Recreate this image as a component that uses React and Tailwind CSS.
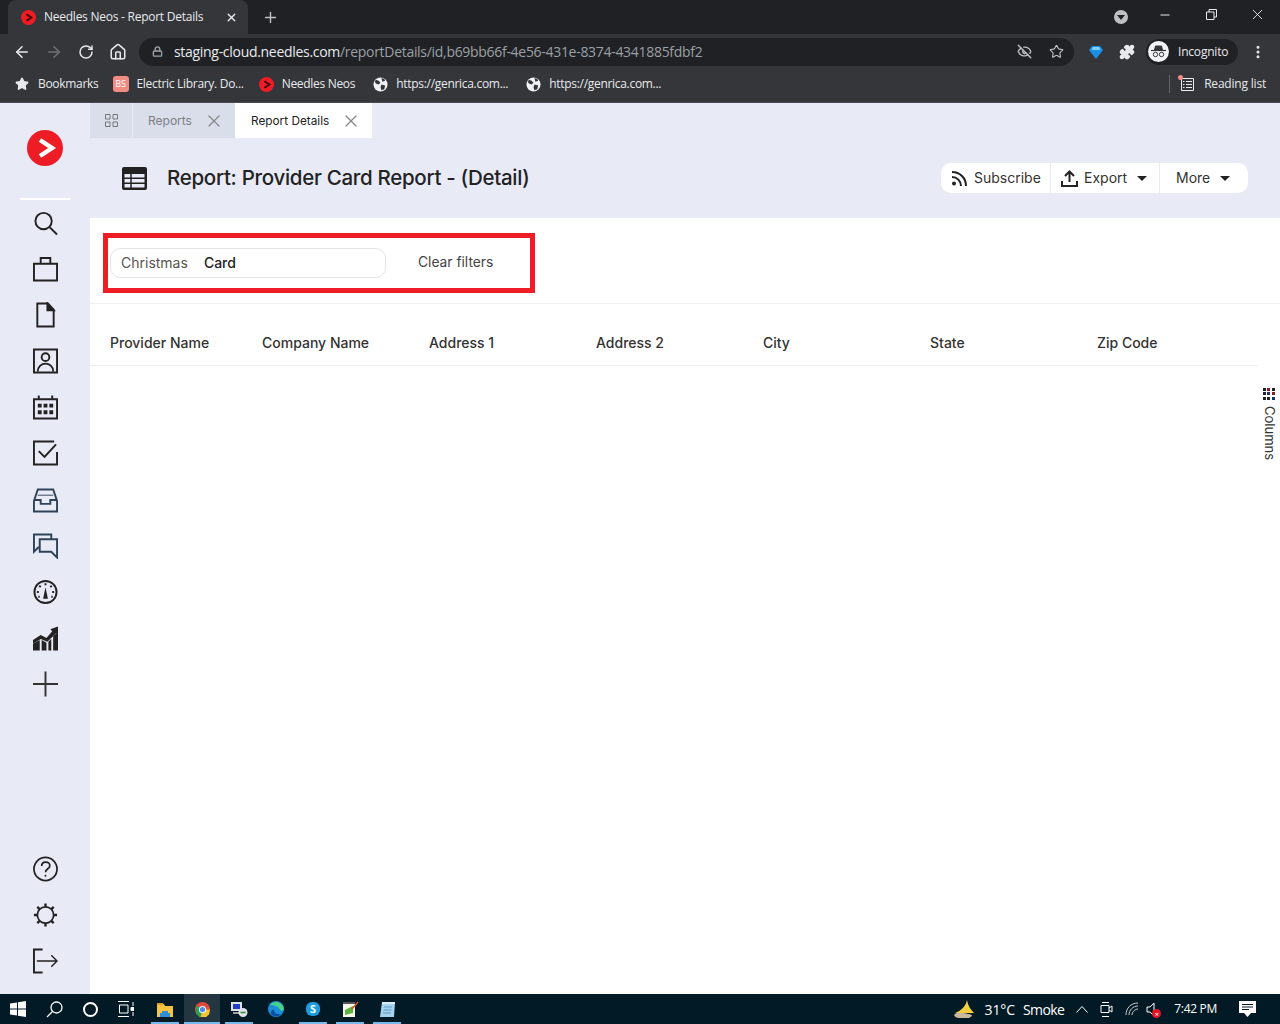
import { Star, ArrowLeft, ArrowRight, RotateCw, Home, Lock, EyeOff, Puzzle, Plus, X, MoreVertical, Minus } from 'lucide-react'

const NeedlesDot = ({ size = 16 }) => (
  <svg width={size} height={size} viewBox="0 0 36 36" className="shrink-0">
    <circle cx="18" cy="18" r="18" fill="#ee1c25" />
    <path d="M13 10l12 8-12 8" fill="none" stroke={size > 20 ? '#fff' : '#3a0a0d'} strokeWidth="4.5" />
  </svg>
)

const Globe = () => (
  <svg width="15" height="15" viewBox="0 0 16 16" className="shrink-0">
    <circle cx="8" cy="8" r="7.5" fill="#f1f3f4" />
    <path d="M3 3l3 1 2 2-2 2-3-1-1-2zM9 8l4 1-1 4-3 1-1-3zM9 1l3 1 1 2-3 1z" fill="#35363a" />
  </svg>
)

const Bookmark = ({ icon, label, className = '' }) => (
  <div className={`flex items-center gap-[8px] ${className}`}>
    {icon}
    <span className="text-[12px] text-[#e8eaed] tracking-[-0.3px] whitespace-nowrap">{label}</span>
  </div>
)

function Browser() {
  return (
    <div className="h-[103px] shrink-0 bg-[#35363a] font-['Open_Sans',sans-serif]">
      {/* tab strip */}
      <div className="h-[34px] bg-[#202124] flex items-end pl-[8px]">
        <div className="w-[240px] h-[34px] bg-[#35363a] rounded-t-[8px] flex items-center pl-[13px] pr-[10px]">
          <NeedlesDot size={15} />
          <span className="ml-[8px] text-[12px] text-[#e8eaed] tracking-[-0.25px] whitespace-nowrap">Needles Neos - Report Details</span>
          <X size={13} strokeWidth={2.5} className="ml-auto text-[#e8eaed] shrink-0" />
        </div>
        <div className="h-[34px] flex items-center ml-[14px]">
          <Plus size={17} strokeWidth={2} className="text-[#bdc1c6]" />
        </div>
        <div className="ml-auto h-[34px] flex items-center">
          <div className="w-[14px] h-[14px] rounded-full bg-[#bdc1c6] flex items-center justify-center mr-[14px] mt-[-1px]">
            <div className="w-0 h-0 border-x-[4px] border-x-transparent border-t-[5px] border-t-[#202124] mt-[1px]" />
          </div>
          <div className="w-[46px] flex justify-center mt-[-5px]"><Minus size={14} className="text-[#e8eaed]" /></div>
          <div className="w-[46px] flex justify-center mt-[-5px]">
            <svg width="11" height="11" viewBox="0 0 11 11" fill="none" stroke="#e8eaed"><path d="M.5 3h7.5v7.5H.5zM3 3V.5h7.500V8H8" /></svg>
          </div>
          <div className="w-[46px] flex justify-center mt-[-5px]"><X size={17} strokeWidth={1.3} className="text-[#e8eaed]" /></div>
        </div>
      </div>
      {/* toolbar */}
      <div className="h-[35px] flex items-center pl-[13px]">
        <ArrowLeft size={18} strokeWidth={2} className="text-[#e8eaed] shrink-0" />
        <ArrowRight size={18} strokeWidth={2} className="text-[#6f7175] shrink-0 ml-[14px]" />
        <RotateCw size={16} strokeWidth={2.2} className="text-[#e8eaed] shrink-0 ml-[15px]" />
        <Home size={18} strokeWidth={2} className="text-[#e8eaed] shrink-0 ml-[15px]" />
        <div className="ml-[12px] w-[935px] h-[28px] bg-[#202124] rounded-full flex items-center pl-[13px] pr-[10px]">
          <Lock size={11} strokeWidth={3} className="text-[#9aa0a6] shrink-0" />
          <span className="ml-[11px] text-[14px] tracking-[-0.3px] whitespace-nowrap text-[#e8eaed]">
            staging-cloud.needles.com<span className="text-[#9aa0a6]">/reportDetails/id,b69bb66f-4e56-431e-8374-4341885fdbf2</span>
          </span>
          <EyeOff size={15} strokeWidth={2.2} className="ml-auto text-[#bdc1c6] shrink-0" />
          <Star size={15} strokeWidth={1.8} className="ml-[17px] text-[#bdc1c6] shrink-0" />
        </div>
        <svg width="14" height="14" viewBox="0 0 14 14" className="ml-[15px] shrink-0">
          <path d="M3 1h8l3 4-7 9-7-9z" fill="#1a8fe8" />
          <path d="M4 2h6l1.500 3h-9z" fill="#7cd0fb" />
        </svg>
        <Puzzle size={16} fill="#e8eaed" className="ml-[16px] text-[#e8eaed] shrink-0" />
        <div className="ml-[11px] h-[26px] w-[92px] bg-[#202124] rounded-full flex items-center pl-[2px] shrink-0">
          <div className="w-[21px] h-[21px] rounded-full bg-[#f1f3f4] flex items-center justify-center shrink-0">
            <svg width="15" height="13" viewBox="0 0 15 13" fill="none" stroke="#35363a">
              <path d="M3.500 5l1-4h6l1 4z" fill="#35363a" />
              <path d="M0 5.500h15" strokeWidth="1.200" />
              <circle cx="4.500" cy="9.500" r="2.200" />
              <circle cx="10.500" cy="9.500" r="2.200" />
            </svg>
          </div>
          <span className="ml-[9px] text-[12px] text-[#e8eaed] tracking-[-0.2px]">Incognito</span>
        </div>
        <MoreVertical size={16} strokeWidth={2.5} className="ml-[12px] text-[#e8eaed] shrink-0" />
      </div>
      {/* bookmarks */}
      <div className="h-[34px] border-b border-[#4a4b50] flex items-center pl-[15px] pr-[14px] pb-[3px]">
        <Bookmark icon={<Star size={14} fill="#e8eaed" className="text-[#e8eaed] mr-[1px]" />} label="Bookmarks" />
        <Bookmark
          className="ml-[14px]"
          icon={<div className="w-[16px] h-[16px] rounded-[3px] bg-[#f28b82] text-[9px] text-white flex items-center justify-center">BS</div>}
          label="Electric Library. Do..."
        />
        <Bookmark className="ml-[15px]" icon={<NeedlesDot size={15} />} label="Needles Neos" />
        <Bookmark className="ml-[18px]" icon={<Globe />} label="https://genrica.com..." />
        <Bookmark className="ml-[18px]" icon={<Globe />} label="https://genrica.com..." />
        <div className="ml-auto h-[18px] w-px bg-[#5f6368]" />
        <div className="relative ml-[10px]">
          <svg width="15" height="15" viewBox="0 0 15 15" fill="none" stroke="#e8eaed" className="shrink-0">
            <path d="M1.500 1.500h12v12h-12zM6 4.500h6M6 7.500h6M6 10.500h6M3 4.500h1.500M3 7.500h1.500M3 10.500h1.500" />
          </svg>
          <div className="absolute left-[-2px] top-[-2px] w-[5px] h-[5px] rounded-full bg-[#f28b82]" />
        </div>
        <span className="ml-[9px] text-[12px] text-[#e8eaed] tracking-[-0.2px] whitespace-nowrap">Reading list</span>
      </div>
    </div>
  )
}

const ic = { width: 25, height: 26, viewBox: '0 0 26 26', fill: 'none', stroke: '#222', strokeWidth: 2 }

const navIcons = [
  <svg {...ic} key="search"><circle cx="11" cy="11" r="8.500" /><path d="M17 17l8 8" /></svg>,
  <svg {...ic} key="case"><path d="M1 7.500h24V25H1zM8 7.500V1.500h10v6" /></svg>,
  <svg {...ic} key="doc"><path d="M4.500 1h11l6 6.500V25h-17z" /><path d="M15 1l6.500 7H15z" fill="#222" /></svg>,
  <svg {...ic} key="contact"><path d="M1 1h24v24H1z" /><circle cx="13" cy="9" r="4" /><path d="M5 24c0-11 16-11 16 0" /></svg>,
  <svg {...ic} key="cal">
    <path d="M1 5h24v20H1zM6 1v4M20 1v4" />
    <path d="M5 9.500h4v4H5zM11 9.500h4v4h-4zM17 9.500h4v4h-4zM5 16.500h4v4H5zM11 16.500h4v4h-4zM17 16.500h4v4h-4z" fill="#222" stroke="none" />
  </svg>,
  <svg {...ic} key="check"><path d="M25 12v13H1V1h21" /><path d="M6 11l6 6L24 4" /></svg>,
  <svg {...ic} stroke="#2f4358" key="inbox"><path d="M1 14L5 2h16l4 12v11H1zM1 13h7v4h10v-4h7" /><path d="M5 8h16" strokeWidth="1" /></svg>,
  <svg {...ic} stroke="#2f4358" key="chat"><path d="M19 5V1H1v18l5-5M7 6h18v19l-6-6H7z" /></svg>,
  <svg {...ic} key="gauge">
    <circle cx="13" cy="13" r="11.500" />
    <path d="M13 8l2.500 12h-5z" fill="#222" stroke="none" />
    <path d="M13 4v2M6.500 6.500l1.500 1.500M19.500 6.500L18 8M4 13h2M20 13h2M5.500 18h1.500M19 18h1.500" strokeWidth="2" />
  </svg>,
  <svg {...ic} stroke="none" key="chart">
    <path d="M0 15l8-5 6 3 6-7-2-2 8-3v9l-2-2-9 9-7-3-8 5z" fill="#222" />
    <path d="M0 19l7-4v11H0zM9 15l5 3v8H9zM16 17l3-3v12h-3zM21 11l5-4v19h-5z" fill="#222" />
  </svg>,
  <svg {...ic} stroke="#333" key="plus"><path d="M13 0v26M0 13h26" /></svg>,
]

const bottomIcons = [
  <svg {...ic} strokeWidth="1.800" key="help">
    <circle cx="13" cy="13" r="12" />
    <path d="M9 10c0-5.500 8.500-5.500 8.500-.5 0 3.500-4.500 3-4.500 7" />
    <circle cx="13" cy="20" r="1" fill="#222" stroke="none" />
  </svg>,
  <svg {...ic} key="gear">
    <circle cx="13" cy="13" r="8.500" strokeWidth="1.800" />
    <path d="M13 1v3.500M13 21.500V25M1 13h3.500M21.500 13H25M4.500 4.500L7 7M19 19l2.500 2.500M4.500 21.500L7 19M19 7l2.500-2.500" strokeWidth="2.500" />
  </svg>,
  <svg {...ic} key="exit">
    <path d="M10 1H1v24h9" />
    <path d="M4 13h21M19 7l6 6-6 6" strokeWidth="1.500" />
  </svg>,
]

function Rail() {
  return (
    <aside className="w-[90px] shrink-0 bg-[#e8eaf6] flex flex-col items-center">
      <div className="mt-[27px]"><NeedlesDot size={36} /></div>
      <div className="mt-[32px] w-[50px] h-[2px] bg-white" />
      <div className="mt-[10px] flex flex-col items-center gap-[20.100px]">
        {navIcons.map((icon, i) => <div key={i} className="h-[26px]">{icon}</div>)}
      </div>
      <div className="mt-auto mb-[20px] flex flex-col items-center gap-[20px]">
        {bottomIcons.map((icon, i) => <div key={i} className="h-[26px]">{icon}</div>)}
      </div>
    </aside>
  )
}

const Caret = () => <div className="w-0 h-0 border-x-[5px] border-x-transparent border-t-[5px] border-t-[#222]" />

const columns = [
  ['Provider Name', 'w-[152px]'],
  ['Company Name', 'w-[167px]'],
  ['Address 1', 'w-[167px]'],
  ['Address 2', 'w-[167px]'],
  ['City', 'w-[167px]'],
  ['State', 'w-[167px]'],
  ['Zip Code', 'w-[161px]'],
]

function Report() {
  return (
    <main className="flex-1 min-w-0 flex flex-col bg-white text-[#222]">
      <div className="bg-[#e8eaf6] h-[115px] shrink-0">
        {/* tabs */}
        <div className="flex h-[35px]">
          <div className="w-[42px] bg-[#d9deea] flex items-center justify-center">
            <svg width="13" height="13" viewBox="0 0 13 13" fill="none" stroke="#777"><path d="M.5.500h4.500V5H.5zM8 .500h4.500V5H8zM.5 8h4.500v4.500H.5zM8 8h4.500v4.500H8z" /></svg>
          </div>
          <div className="w-[102px] ml-px bg-[#d9deea] flex items-center pl-[15px] pt-px">
            <span className="text-[12px] text-[#7d7f85]">Reports</span>
            <X size={20} strokeWidth={1.500} className="ml-[12px] text-[#888] shrink-0" />
          </div>
          <div className="w-[137px] bg-white flex items-center pl-[16px]">
            <span className="text-[11.800px] text-[#222] whitespace-nowrap pt-[2px]">Report Details</span>
            <X size={20} strokeWidth={1.500} className="ml-[12px] text-[#888] shrink-0" />
          </div>
        </div>
        {/* title */}
        <div className="h-[80px] flex items-center pl-[32px] pr-[32px]">
          <svg width="25" height="23" viewBox="0 0 25 23" className="shrink-0">
            <rect width="25" height="23" rx="2" fill="#222" />
            <path d="M2.500 7h20v3.500h-20zM2.500 12h20v3.500h-20zM2.500 17h20v3.500h-20z" fill="#e8eaf6" />
            <path d="M9 7v14" stroke="#222" strokeWidth="1.500" />
          </svg>
          <h1 className="ml-[20px] text-[20.500px] font-medium tracking-[-0.3px] text-[#222] whitespace-nowrap">Report: Provider Card Report - (Detail)</h1>
          <div className="ml-auto h-[30px] w-[307px] bg-white rounded-[10px] flex text-[14px] text-[#333]">
            <div className="w-[110px] border-r border-[#e8eaf6] flex items-center pl-[10px] gap-[5px]">
              <svg width="18" height="16" viewBox="0 0 18 16" fill="none" stroke="#222" strokeWidth="2" className="shrink-0">
                <circle cx="3" cy="13.500" r="2" fill="#222" stroke="none" />
                <path d="M1 7c5 0 9 4 9 9M1 2c8 0 14 6 14 14" />
              </svg>
              <span className="mt-[-2px]">Subscribe</span>
            </div>
            <div className="w-[109px] border-r border-[#e8eaf6] flex items-center pl-[10px]">
              <svg width="17" height="17" viewBox="0 0 17 17" fill="none" stroke="#222" strokeWidth="2" className="shrink-0">
                <path d="M8.500 12V2M4 6l4.500-4.500L13 6M1 11v5h15v-5" />
              </svg>
              <span className="ml-[6px] mt-[-2px]">Export</span>
              <div className="ml-[10px]"><Caret /></div>
            </div>
            <div className="flex-1 flex items-center pl-[16px]">
              <span className="mt-[-2px]">More</span>
              <div className="ml-[10px]"><Caret /></div>
            </div>
          </div>
        </div>
      </div>
      {/* filters */}
      <div className="h-[86px] shrink-0 border-b border-[#eceef0] pl-[13px] pt-[15px]">
        <div className="w-[432px] h-[60px] border-[5px] border-[#ee1c25] flex items-center pl-[2px]">
          <div className="w-[276px] h-[30px] rounded-[10px] border border-[#e4e5e8] flex items-center pl-[10px] pb-[2px] text-[14px]">
            <span className="text-[#555]">Christmas</span>
            <span className="ml-[16px] text-[#222] font-medium">Card</span>
          </div>
          <span className="ml-[32px] mt-[-2px] text-[13.800px] text-[#444]">Clear filters</span>
        </div>
      </div>
      {/* table */}
      <div className="flex flex-1 min-h-0">
        <div className="flex-1 min-w-0">
          <div className="h-[62px] border-b border-[#eceef0] flex items-center pl-[20px] pt-[16px]">
            {columns.map(([label, width]) => (
              <div key={label} className={`${width} shrink-0 text-[14px] font-medium text-[#333] whitespace-nowrap`}>{label}</div>
            ))}
          </div>
        </div>
        <div className="w-[22px] shrink-0 flex flex-col items-center pt-[84px]">
          <div className="grid grid-cols-3 gap-px w-[12px] h-[12px] shrink-0">
            {['#222', '#8a1c2a', '#222', '#222', '#1d2f6e', '#8a1c2a', '#222', '#222', '#1d2f6e'].map((c, i) => (
              <div key={i} className="w-[3px] h-[3px]" style={{ background: c }} />
            ))}
          </div>
          <span className="mt-[6px] text-[13px] text-[#333] [writing-mode:vertical-rl]">Columns</span>
        </div>
      </div>
    </main>
  )
}

const appIcons = [
  {
    key: 'files', w: 'w-[28px]', ml: 'ml-[17px]', on: true,
    svg: <svg width="16" height="15" viewBox="0 0 16 15"><path d="M0 2h7l1 2h8v11H0z" fill="#f6c342" /><path d="M0 1h6v2H0z" fill="#e09b1f" /><path d="M5 9h6v2h2v4H3v-4h2z" fill="#2d8fd5" /></svg>,
  },
  {
    key: 'chrome', w: 'w-[36px]', ml: 'ml-[5px]', on: true, active: true,
    svg: <svg width="15" height="15" viewBox="0 0 16 16"><circle cx="8" cy="8" r="8" fill="#e04a3a" /><path d="M8 8L1 4v8l3.500 4H8z" fill="#2fa04e" /><path d="M8 8h8l-1 5-3 3H6z" fill="#f5c431" /><circle cx="8" cy="8" r="3.800" fill="#fff" /><circle cx="8" cy="8" r="2.800" fill="#4a8af0" /></svg>,
  },
  {
    key: 'rdp', w: 'w-[28px]', ml: 'ml-[5px]', on: true,
    svg: <svg width="18" height="16" viewBox="0 0 18 16"><path d="M1 1h11v9H1z" fill="#dfe3e8" /><path d="M3 3h7v5H3z" fill="#1f3fc4" /><path d="M3 11h8v2H3z" fill="#9aa0a6" /><circle cx="13" cy="11.500" r="4.500" fill="#dfe3e8" /><path d="M10.500 11.500h5" stroke="#2c8a2c" strokeWidth="1.500" /></svg>,
  },
  {
    key: 'edge', w: 'w-[30px]', ml: 'ml-[8px]',
    svg: <svg width="16" height="16" viewBox="0 0 16 16"><circle cx="8" cy="8" r="8" fill="#1a8fd8" /><path d="M2 4c3-5 13-4 14 4 0 2-3 2-4 1 0-3-6-5-10-5z" fill="#48d18a" /><path d="M6 9c0 3 3 5 7 4-2 3-8 3-10 0-1-2 2-6 3-4z" fill="#0b4d9e" /></svg>,
  },
  {
    key: 'skype', w: 'w-[28px]', ml: 'ml-[8px]', on: true,
    svg: <div className="w-[14px] h-[14px] rounded-[6px] bg-[#1a9fe0] flex items-center justify-center text-[11px] font-bold text-white font-['Open_Sans',sans-serif]">S</div>,
  },
  {
    key: 'notepad', w: 'w-[28px]', ml: 'ml-[9px]', on: true,
    svg: <svg width="17" height="16" viewBox="0 0 17 16"><path d="M1 2h12v14H1z" fill="#f6f6e8" /><path d="M1 1h12v2H1z" fill="#555" /><path d="M3 9l8-4v7l-8 2z" fill="#5fb13f" /><path d="M10 8l6-7" stroke="#d9502e" strokeWidth="1.500" /></svg>,
  },
  {
    key: 'pad', w: 'w-[28px]', ml: 'ml-[9px]', on: true,
    svg: <svg width="15" height="16" viewBox="0 0 15 16"><path d="M2 1h13l-1 15H0z" fill="#a6d4ee" /><path d="M2 1h13v2H2z" fill="#dcebf5" /><path d="M4 6h8M3.500 9h8M3 12h8" stroke="#5d9cc4" /></svg>,
  },
]

function Taskbar() {
  return (
    <div className="h-[30px] shrink-0 bg-[#021a26] flex items-center text-white font-['Open_Sans',sans-serif]">
      <svg width="16" height="16" viewBox="0 0 16 16" fill="#fff" className="ml-[10px] shrink-0">
        <path d="M0 2.500l7-1v6H0zM8 1.300L16 0v7.500H8zM0 8.500h7v6l-7-1zM8 8.500h8V16l-8-1.300z" />
      </svg>
      <svg width="17" height="17" viewBox="0 0 17 17" fill="none" stroke="#fff" strokeWidth="1.300" className="ml-[20px] shrink-0">
        <circle cx="10.500" cy="6.500" r="5.500" /><path d="M6.500 10.500L1 16" />
      </svg>
      <div className="ml-[20px] w-[15px] h-[15px] rounded-full border-[2px] border-white shrink-0" />
      <svg width="16" height="16" viewBox="0 0 16 16" fill="none" stroke="#fff" className="ml-[20px] shrink-0">
        <path d="M0 .5h11M0 15.500h11M1.500 4h8.500v8H1.500zM15 1v4M15 11v4" /><path d="M13 6.500h3v3h-3z" fill="#fff" />
      </svg>
      {appIcons.map((a) => (
        <div key={a.key} className={`${a.ml} ${a.w} h-[30px] relative flex items-center justify-center shrink-0 ${a.active ? 'bg-[#24363f]' : ''}`}>
          {a.svg}
          {a.on && <div className="absolute bottom-0 inset-x-0 h-[2px] bg-[#76b9ed]" />}
        </div>
      ))}
      <div className="ml-auto flex items-center pr-[24px]">
        <svg width="22" height="18" viewBox="0 0 22 18" className="shrink-0">
          <path d="M14 0c1 6 4 10 7 13H2c6-2 11-7 12-13z" fill="#f7cf3d" />
          <path d="M1 15c3-3 5-2 7-2 3 0 5 0 7 1 3 0 4 1 4 2l-3 2H6c-3 0-4-1-5-3z" fill="#c9b79c" />
        </svg>
        <span className="ml-[10px] text-[14px] tracking-[-0.1px]">31°C</span>
        <span className="ml-[8px] text-[14px] tracking-[-0.6px]">Smoke</span>
        <svg width="12" height="7" viewBox="0 0 12 7" fill="none" stroke="#fff" className="ml-[12px] shrink-0"><path d="M.5 6.500l5.500-6 5.500 6" /></svg>
        <svg width="13" height="17" viewBox="0 0 13 17" fill="none" stroke="#fff" className="ml-[12px] shrink-0">
          <path d="M2 1.500h7M2 15.500h7M1 4.500h8v7H1zM9 7l3-2v6L9 9" />
        </svg>
        <svg width="14" height="14" viewBox="0 0 14 14" fill="none" stroke="#cfd3d6" className="ml-[12px] shrink-0">
          <path d="M1 13c0-7 5-12 12-12M4 13c0-5 4-9 9-9M7 13c0-3 3-6 6-6" />
        </svg>
        <div className="relative ml-[7px] shrink-0">
          <svg width="12" height="15" viewBox="0 0 12 15" fill="none" stroke="#fff"><path d="M1 5h3l4-4v13l-4-4H1z" /></svg>
          <div className="absolute left-[6px] top-[7px] w-[9px] h-[9px] rounded-full bg-[#e81123] text-[8px] leading-[9px] text-center">×</div>
        </div>
        <span className="ml-[16px] text-[12px] tracking-[-0.3px] whitespace-nowrap">7:42 PM</span>
        <svg width="17" height="16" viewBox="0 0 17 16" className="ml-[22px] shrink-0">
          <path d="M0 0h17v12h-5l-3.500 4L5 12H0z" fill="#fff" />
          <path d="M3 3.500h11M3 6h11M3 8.500h7" stroke="#021a26" />
        </svg>
      </div>
    </div>
  )
}

export default function App() {
  return (
    <div className="h-screen flex flex-col overflow-hidden bg-white font-['Inter',sans-serif]">
      <Browser />
      <div className="flex flex-1 min-h-0">
        <Rail />
        <Report />
      </div>
      <Taskbar />
    </div>
  )
}
